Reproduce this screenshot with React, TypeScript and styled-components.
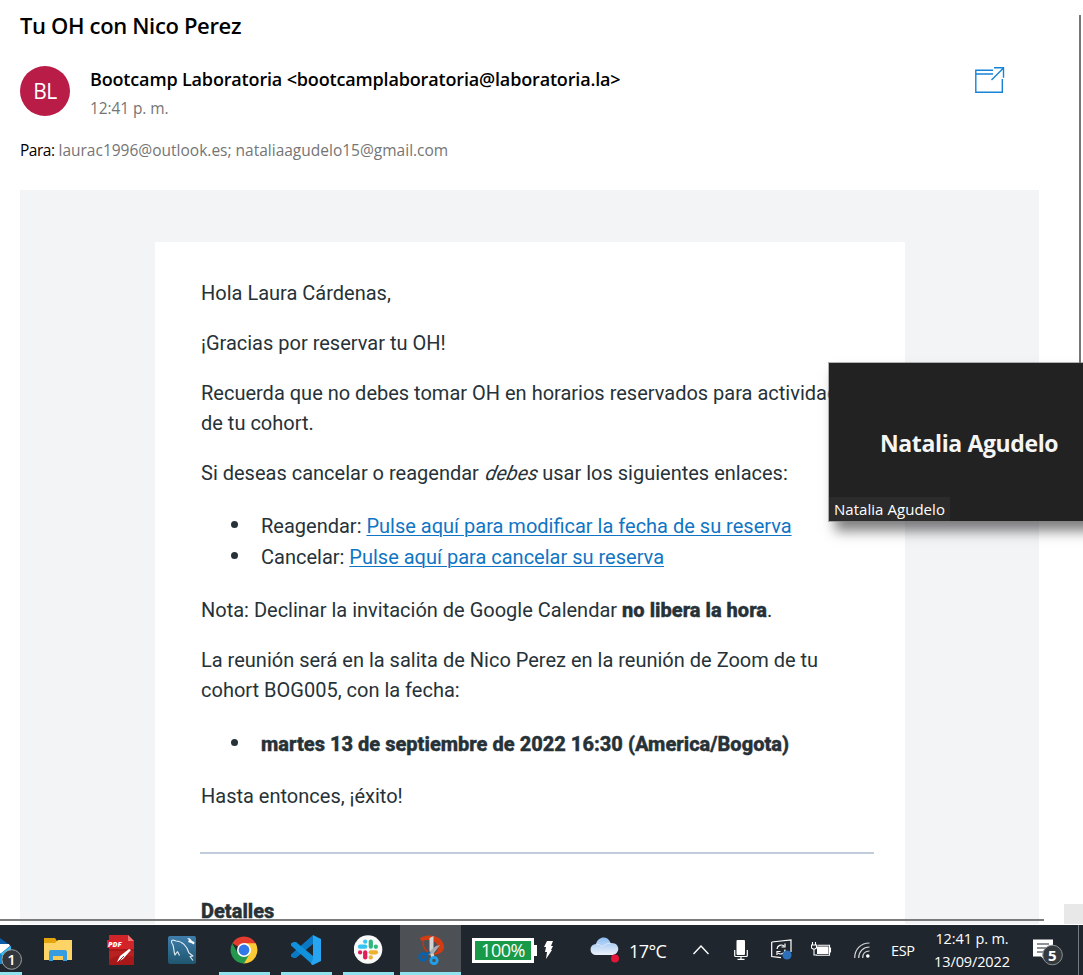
import React from 'react';
import styled, { createGlobalStyle } from 'styled-components';

const GlobalStyle = createGlobalStyle`
  * { box-sizing: border-box; }
  html, body { margin: 0; padding: 0; overflow: hidden; }
  body { font-family: "Open Sans", "Noto Sans", sans-serif; background: #fff; }
  svg { display: block; flex: none; }
`;

const Screen = styled.div`
  position: relative;
  display: flex;
  flex-direction: column;
  width: 1083px;
  height: 975px;
  overflow: hidden;
  background: #fff;
`;

const Mail = styled.main`
  display: flex;
  flex-direction: column;
  height: 924px;
  margin-bottom: 1px;
  padding: 0 44px 0 20px;
  overflow: hidden;
`;

const Subject = styled.h1`
  margin: 9px 0 0;
  height: 35px;
  font-size: 22px;
  line-height: 32px;
  font-weight: 600;
  letter-spacing: -0.35px;
  color: #000;
  white-space: nowrap;
`;

const Header = styled.header`
  display: flex;
  height: 56px;
  margin-top: 22px;
`;

const Avatar = styled.div`
  width: 50px;
  height: 50px;
  border-radius: 50%;
  background: #b91c47;
  color: #fff;
  display: flex;
  align-items: center;
  justify-content: center;
  font-size: 21px;
  letter-spacing: -0.6px;
`;

const Sender = styled.div`
  flex: 1;
  margin-left: 20px;
  white-space: nowrap;
`;

const SenderName = styled.div`
  font-size: 18px;
  line-height: 26px;
  font-weight: 600;
  letter-spacing: -0.16px;
  color: #000;
`;

const SentAt = styled.div`
  margin-top: 4px;
  font-size: 15.5px;
  line-height: 24px;
  letter-spacing: -0.1px;
  color: #757575;
`;

const OpenButton = styled.button`
  width: 30px;
  height: 28px;
  margin: 1px 34px 0 0;
  padding: 0;
  border: 0;
  background: none;
`;

const Recipients = styled.div`
  height: 51px;
  margin-top: 17px;
  font-size: 15.5px;
  line-height: 22px;
  color: #757575;
  white-space: nowrap;
`;

const Label = styled.span`
  color: #000;
  letter-spacing: -0.5px;
`;

const Canvas = styled.section`
  flex: 1;
  min-height: 0;
  display: flex;
  padding: 52px 134px 0 135px;
  background: #f3f4f6;
`;

const Letter = styled.article`
  flex: 1;
  padding: 36px 31px 0 46px;
  background: #fff;
  overflow: hidden;
  font-family: Roboto, sans-serif;
  font-size: 20px;
  line-height: 30px;
  color: #263238;
`;

const Paragraph = styled.p`
  margin: 0 0 20px;
  white-space: nowrap;
`;

const Emphasis = styled.em`
  display: inline-block;
  margin: 0 -1px 0 2px;
  transform: skewX(-12deg);
`;

const List = styled.ul<{ $top: number; $bottom: number }>`
  list-style: none;
  margin: ${p => p.$top}px 0 ${p => p.$bottom}px;
  padding: 0 0 0 30px;
  display: flex;
  flex-direction: column;
  gap: 1px;
`;

const Item = styled.li`
  display: flex;
  align-items: center;
  white-space: pre;
  &::before {
    content: '';
    width: 7px;
    height: 7px;
    margin: 0 23px 4px 0;
    border-radius: 50%;
    background: #263238;
  }
`;

const Link = styled.a`
  color: #0f75c4;
  text-decoration: underline;
  text-decoration-thickness: 1px;
  text-underline-offset: 2px;
`;

const Strong = styled.strong`
  font-weight: 800;
  letter-spacing: 0.02px;
  -webkit-text-stroke: 0.4px #263238;
`;

const Rule = styled.hr`
  margin: 41px 0 42px -1px;
  border: 0;
  height: 2px;
  background: #c0ccda;
`;

const RightEdge = styled.div`
  position: absolute;
  left: 1079px;
  top: 15px;
  width: 2px;
  height: 348px;
  background: #777;
`;

const BottomEdge = styled.div`
  position: absolute;
  left: 0;
  top: 919px;
  width: 1044px;
  height: 2px;
  background: #7b7b7b;
`;

const Corner = styled.div`
  position: absolute;
  left: 1064px;
  top: 904px;
  width: 19px;
  height: 20px;
  background: #e8e8e8;
`;

const CallWindow = styled.aside`
  position: absolute;
  left: 829px;
  top: 363px;
  width: 270px;
  height: 158px;
  background: #222;
  box-shadow: 0 0 0 1px rgba(130, 130, 130, 0.6), 6px 10px 12px 0 rgba(0, 0, 0, 0.5);
  color: #fff;
  display: flex;
  flex-direction: column;
  justify-content: flex-end;
  align-items: flex-start;
`;

const CallName = styled.div`
  flex: 1;
  padding: 64px 0 0 51px;
  font-size: 23px;
  line-height: 32px;
  font-weight: 700;
  letter-spacing: -0.37px;
  color: #f5f5f5;
  white-space: nowrap;
`;

const CallTag = styled.div`
  height: 24px;
  width: 121px;
  padding-left: 5px;
  background: #2b2b2b;
  font-size: 15px;
  line-height: 24px;
  letter-spacing: 0.04px;
  white-space: nowrap;
`;

const Taskbar = styled.footer`
  display: flex;
  height: 50px;
  background: #20262e;
  color: #fff;
`;

const TaskButton = styled.div<{ $w?: number; $line?: number; $active?: boolean }>`
  flex: none;
  display: flex;
  flex-direction: column;
  align-items: center;
  justify-content: space-between;
  width: ${p => p.$w ?? 62}px;
  height: 50px;
  padding-top: 10px;
  background: ${p => (p.$active ? '#4d5156' : 'transparent')};
  &::after {
    content: '';
    width: ${p => p.$line ?? 0}px;
    height: 3px;
    background: #8ee3ee;
  }
`;

const MailButton = styled(TaskButton)`
  align-items: flex-start;
  padding-top: 13px;
`;

const Tray = styled.div<{ $w: number }>`
  flex: none;
  display: flex;
  align-items: center;
  width: ${p => p.$w}px;
  height: 50px;
  white-space: nowrap;
`;

const Charge = styled.div`
  position: relative;
  width: 62px;
  height: 25px;
  border: 3px solid #fff;
  background: #189a48;
  font-size: 18px;
  line-height: 18px;
  letter-spacing: -0.5px;
  text-align: center;
  &::after {
    content: '';
    position: absolute;
    left: 59px;
    top: 4px;
    width: 3px;
    height: 11px;
    background: #fff;
  }
`;

const Temperature = styled.span`
  margin-left: 10px;
  padding-top: 1px;
  font-size: 18px;
  letter-spacing: -0.6px;
`;

const Language = styled.span`
  font-size: 14.5px;
  letter-spacing: -0.4px;
`;

const Clock = styled.div`
  width: 92px;
  padding-top: 2px;
  font-size: 14.5px;
  line-height: 23px;
  letter-spacing: -0.12px;
  text-align: center;
`;

const BadgeText = styled.text`
  font-family: "Open Sans", sans-serif;
  font-size: 15px;
  fill: #fff;
  text-anchor: middle;
`;

const OpenIcon = () => (
  <svg width="30" height="28" fill="none" stroke="#1683d8" strokeWidth="1.4">
    <path d="M18 3.3H.8v21.9h26.5V12M.8 7H18M16.5 13 28.5 1M19 .8h9.5v10" />
  </svg>
);

const MailIcon = () => (
  <svg width="28" height="34" viewBox="0 0 28 34">
    <path d="M0 0 11 8v18H0Z" fill="#0b5cab" />
    <path d="M0 6h9l1 2L0 16Z" fill="#fff" />
    <path d="m0 16 11-8v18H0Z" fill="#35c1f4" />
    <path d="M0 15 10 26H0Z" fill="#168ad1" />
    <circle cx="11.7" cy="21.500" r="9.800" fill="#33373b" stroke="#9b9da0" />
    <BadgeText x="11.500" y="27" fontWeight="600">1</BadgeText>
  </svg>
);

const FolderIcon = () => (
  <svg width="30" height="30">
    <path d="M1 3h11l2 3v5H1Z" fill="#e5a50c" />
    <path d="M1 8h11l3-3h14v20H1Z" fill="#ffd466" />
    <path d="M6 26V17q0-2 2-2h14q2 0 2 2v9h-4v-5H10v5Z" fill="#379ce0" />
    <path d="M10 21h10v4H10Z" fill="#f8cb58" />
  </svg>
);

const PdfIcon = () => (
  <svg width="30" height="30">
    <path d="M4 0h19l6 6v24H4Z" fill="#a91818" />
    <path d="M4 0h19l6 6v8H4Z" fill="#cf2429" />
    <path d="M4 16h25v6q-14-5-25 3Z" fill="#b92020" />
    <path d="M23 0v6h6Z" fill="#ef7474" />
    <path d="M2 5h18l-1 8H2Z" fill="#dc2027" />
    <text x="3" y="11.600" fontFamily="Open Sans" fontSize="7.300" fontWeight="800" fontStyle="italic" fill="#fff">PDF</text>
    <path d="m12 27 3-6 9-7 2 1-8 9Z" fill="#fff" />
    <path d="m13 27 6-6" stroke="#b22" />
  </svg>
);

const DolphinIcon = () => (
  <svg width="30" height="30">
    <defs>
      <linearGradient id="sea" x2="0" y2="1"><stop stopColor="#3f7dab" /><stop offset="1" stopColor="#1f566f" /></linearGradient>
    </defs>
    <rect x="1" y="1" width="28" height="28" rx="2" fill="url(#sea)" />
    <path d="M10.500 16.500 8 20C6.500 16 7 13 6 10 4 7 4 5 6 5l3 1c6 0 11 5 13 12l4 3-3 .5 3 4M10.500 16.500l2 4" fill="none" stroke="#e3edf3" strokeWidth="1.100" strokeLinejoin="round" />
    <path d="m20 3 3 .5L25 6l2.500 1-.5 2.500L24 8l-3-1 1-2Z" fill="#fff" />
  </svg>
);

const ChromeIcon = () => (
  <svg width="28" height="30" viewBox="0 0 28 30">
    <path d="M14 15 2.300 8.300A13.500 13.500 0 0 1 25.700 8.300Z" fill="#e33b2e" />
    <path d="M14 8.300h11.700A13.500 13.500 0 0 1 14 28.500l-2-1 7.800-9.200Z" fill="#fcc934" />
    <path d="M2.300 8.300A13.500 13.500 0 0 0 14 28.500l5.800-10.100-5.800 3-6-3Z" fill="#24994d" />
    <circle cx="14" cy="15" r="7" fill="#fff" />
    <circle cx="14" cy="15" r="5.400" fill="#3279e8" />
  </svg>
);

const CodeIcon = () => (
  <svg width="30" height="30">
    <path d="M22 0 0 19.500v2L2.500 23 5 23 22 9Z" fill="#0a79c5" />
    <path d="M22 30 0 10.500v-2L2.500 7 5 7l17 14Z" fill="#1191dc" />
    <path d="m22 0 8 4v22l-8 4q-2 0-2-2l2-4Z" fill="#28a5f2" />
  </svg>
);

const SlackIcon = () => (
  <svg width="30" height="30">
    <circle cx="14" cy="14.500" r="14.300" fill="#f9f9f9" />
    <g transform="translate(-1 -.5)" strokeWidth="4.200" strokeLinecap="round" fill="none">
      <path d="M7 12.200h5.200" stroke="#36c5f0" /><path d="M12.200 7.100v.1" stroke="#36c5f0" />
      <path d="M17.800 7v5.200" stroke="#2eb67d" /><path d="M22.900 12.200v.1" stroke="#2eb67d" />
      <path d="M17.800 17.800H23" stroke="#ecb22e" /><path d="M17.800 22.900v.1" stroke="#ecb22e" />
      <path d="M12.200 17.800V23" stroke="#e01e5a" /><path d="M7.100 17.800v.1" stroke="#e01e5a" />
    </g>
  </svg>
);

const SnipIcon = () => (
  <svg width="30" height="30">
    <path d="M8 4C5 11 10 17 16 19" fill="none" stroke="#b93818" strokeWidth="1.600" />
    <path d="M4 3C9-.5 18-.5 23 3c6 5 7 12 1 15-2 1.500-5 2-7 1 5-2 7-6 4-10-3-4-10-5-16-3Z" fill="#d23c13" />
    <path d="m13.500 3 4-2v17l1 4-3 1-2-6Z" fill="#d2d4d5" />
    <path d="m24 10-6 8-6 2 3-5 5-4Z" fill="#a9adaf" />
    <circle cx="7" cy="22" r="3.300" fill="none" stroke="#0962ae" strokeWidth="2.800" />
    <path d="m9 20 5-3" stroke="#0962ae" strokeWidth="2.500" />
    <circle cx="18" cy="25.500" r="3.200" fill="none" stroke="#20a0e8" strokeWidth="2.800" />
  </svg>
);

const BoltIcon = () => (
  <svg width="10" height="20"><path d="M3 1h6L7 6h2L7 10h1L2 19l1-7H1l1-5H0Z" fill="#fff" /></svg>
);

const CloudIcon = () => (
  <svg width="29" height="28">
    <defs>
      <linearGradient id="cloud" x2="0" y2="1"><stop stopColor="#8dbcf1" /><stop offset="1" stopColor="#edf2fa" /></linearGradient>
    </defs>
    <path d="M6 19a5.500 5.500 0 0 1 0-11C8 0 18-1 20.500 7c10-1 10 11 2 12Z" fill="url(#cloud)" />
    <path d="M6 8q4 0 6 3 4-4 8.500-4" fill="none" stroke="#d7e5fa" />
    <circle cx="25" cy="22.500" r="4" fill="#e3163a" />
  </svg>
);

const ChevronIcon = () => (
  <svg width="16" height="10" fill="none" stroke="#fff" strokeWidth="1.400"><path d="M.5 9 8 1l7.500 8" /></svg>
);

const MicIcon = () => (
  <svg width="14" height="20">
    <rect x="2.500" width="8.500" height="15" rx="1" fill="#fff" />
    <path d="M.7 10v5.500q0 1 1 1h10.600q1 0 1-1V10M7 17v2.400M3.500 19.300h7" fill="none" stroke="#fff" strokeWidth="1.200" />
  </svg>
);

const SyncIcon = () => (
  <svg width="22" height="22" fill="none" stroke="#fff" strokeWidth="1.200">
    <path d="M.7 3 20 .8V13M.7 3v14.500L10 18.700" />
    <path d="M6 10a4.300 4.300 0 0 1 7-3M14 4.500V8h-3.500M14 10.500A4.300 4.300 0 0 1 7 14M6 16v-3.500h3.500" />
    <circle cx="16" cy="16" r="4.600" fill="#2b70b9" stroke="none" />
  </svg>
);

const PlugIcon = () => (
  <svg width="21" height="16" fill="none" stroke="#fff" strokeWidth="1.100">
    <path d="M1.500 0v3M4.500 0v3M.5 3h5v3L4 7H2L.5 6ZM3 7v6h3M6.500 3.200h12v10H5M19.500 5.500v5" />
    <rect x="6" y="4.500" width="11.500" height="7.500" fill="#fff" stroke="none" />
  </svg>
);

const WifiIcon = () => (
  <svg width="17" height="17" fill="none" stroke="#d5d7d9" strokeWidth="1.200">
    <path d="M.7 16C.7 7 7 1 15.500 1M4.700 16c0-6.500 4.500-11 10.800-11M8.700 16c0-4.300 2.700-7 6.800-7" />
    <circle cx="13.800" cy="14" r="1.800" fill="#fff" stroke="none" />
  </svg>
);

const NotificationIcon = () => (
  <svg width="31" height="31">
    <path d="M0 5h20v17h-8v4l-4-4H0Z" transform="translate(0 -.5)" fill="#fff" />
    <path d="M4 9h12M4 13h12M4 17h8" stroke="#20262e" strokeWidth="1.200" />
    <circle cx="19.500" cy="20" r="9.800" fill="#34393e" stroke="#8f9295" />
    <BadgeText x="19.300" y="25.500" fontWeight="700">5</BadgeText>
  </svg>
);

const ShowDesktop = styled.div`
  width: 5px;
  height: 50px;
  border-left: 1px solid #777b80;
`;

export default function App() {
  return (
    <Screen>
      <GlobalStyle />
      <Mail>
        <Subject>Tu OH con Nico Perez</Subject>
        <Header>
          <Avatar>BL</Avatar>
          <Sender>
            <SenderName>Bootcamp Laboratoria &lt;bootcamplaboratoria@laboratoria.la&gt;</SenderName>
            <SentAt>12:41 p. m.</SentAt>
          </Sender>
          <OpenButton aria-label="Abrir"><OpenIcon /></OpenButton>
        </Header>
        <Recipients><Label>Para:</Label> laurac1996@outlook.es; nataliaagudelo15@gmail.com</Recipients>
        <Canvas>
          <Letter>
            <Paragraph>Hola Laura Cárdenas,</Paragraph>
            <Paragraph>¡Gracias por reservar tu OH!</Paragraph>
            <Paragraph>Recuerda que no debes tomar OH en horarios reservados para actividades<br />de tu cohort.</Paragraph>
            <Paragraph>Si deseas cancelar o reagendar <Emphasis>debes</Emphasis> usar los siguientes enlaces:</Paragraph>
            <List $top={23} $bottom={23}>
              <Item>Reagendar: <Link>Pulse aquí para modificar la fecha de su reserva</Link></Item>
              <Item>Cancelar: <Link>Pulse aquí para cancelar su reserva</Link></Item>
            </List>
            <Paragraph>Nota: Declinar la invitación de Google Calendar <Strong>no libera la hora</Strong>.</Paragraph>
            <Paragraph>La reunión será en la salita de Nico Perez en la reunión de Zoom de tu<br />cohort BOG005, con la fecha:</Paragraph>
            <List $top={24} $bottom={22}>
              <Item><Strong>martes 13 de septiembre de 2022 16:30 (America/Bogota)</Strong></Item>
            </List>
            <Paragraph>Hasta entonces, ¡éxito!</Paragraph>
            <Rule />
            <Strong>Detalles</Strong>
          </Letter>
        </Canvas>
      </Mail>
      <RightEdge />
      <BottomEdge />
      <Corner />
      <CallWindow>
        <CallName>Natalia Agudelo</CallName>
        <CallTag>Natalia Agudelo</CallTag>
      </CallWindow>
      <Taskbar>
        <MailButton $w={27} $line={22}><MailIcon /></MailButton>
        <TaskButton><FolderIcon /></TaskButton>
        <TaskButton><PdfIcon /></TaskButton>
        <TaskButton><DolphinIcon /></TaskButton>
        <TaskButton $line={51}><ChromeIcon /></TaskButton>
        <TaskButton $line={51}><CodeIcon /></TaskButton>
        <TaskButton $w={63} $line={51}><SlackIcon /></TaskButton>
        <TaskButton $w={61} $line={61} $active><SnipIcon /></TaskButton>
        <Tray $w={11} />
        <Tray $w={72}><Charge>100%</Charge></Tray>
        <Tray $w={46}><BoltIcon /></Tray>
        <Tray $w={103}><CloudIcon /><Temperature>17°C</Temperature></Tray>
        <Tray $w={41}><ChevronIcon /></Tray>
        <Tray $w={37}><MicIcon /></Tray>
        <Tray $w={40}><SyncIcon /></Tray>
        <Tray $w={43}><PlugIcon /></Tray>
        <Tray $w={37}><WifiIcon /></Tray>
        <Tray $w={35}><Language>ESP</Language></Tray>
        <Clock>12:41 p. m.<br />13/09/2022</Clock>
        <Tray $w={15} />
        <Tray $w={45}><NotificationIcon /></Tray>
        <ShowDesktop />
      </Taskbar>
    </Screen>
  );
}
